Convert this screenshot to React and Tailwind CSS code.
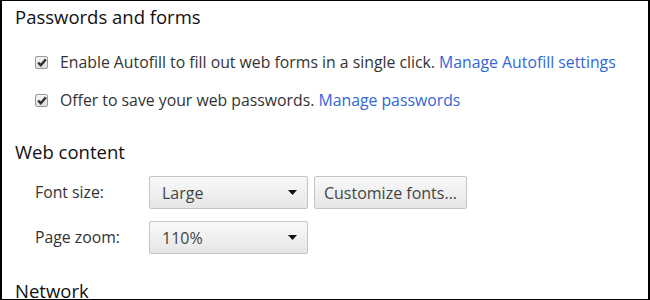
function Checkbox() {
  return (
    <span className="flex h-[13px] w-[13px] shrink-0 items-center justify-center rounded-[2px] border border-[#9a9a9a] bg-gradient-to-b from-[#f6f6f6] to-[#dedede]">
      <svg width="10" height="9" viewBox="0 0 10 9">
        <path d="M1.2 4.6 L3.8 7.2 L8.8 1.4" fill="none" stroke="#333" strokeWidth="2.4" />
      </svg>
    </span>
  )
}

function Select({ value, width }) {
  return (
    <div className={`flex h-[33px] ${width} items-center justify-between rounded-[2px] border border-[#c4c4c4] bg-gradient-to-b from-[#f9f9f9] to-[#e6e6e6] pl-[12px] pr-[10px] text-[16px] text-[#444]`}>
      <span>{value}</span>
      <svg width="9" height="5" viewBox="0 0 9 5">
        <path d="M0 0 H9 L4.5 5 Z" fill="#111" />
      </svg>
    </div>
  )
}

export default function App() {
  return (
    <div
      className="h-[300px] w-[650px] overflow-hidden border-y border-x-2 border-black bg-white"
      style={{ fontFamily: '"Open Sans", "Noto Sans", sans-serif' }}
    >
      <div className="pl-[13px] pt-[3px]">
        <h2 className="text-[18.5px] leading-[26px] text-[#111]">Passwords and forms</h2>
        <div className="mt-[21px] space-y-[16px] pl-[20px] text-[15.8px] leading-[22px] text-[#333]">
          <div className="flex items-center gap-[12px]">
            <Checkbox />
            <p>
              Enable Autofill to fill out web forms in a single click.{' '}
              <a className="text-[#3367d6]">Manage Autofill settings</a>
            </p>
          </div>
          <div className="flex items-center gap-[12px]">
            <Checkbox />
            <p>
              Offer to save your web passwords.{' '}
              <a className="text-[#3367d6]">Manage passwords</a>
            </p>
          </div>
        </div>

        <h2 className="mt-[28px] text-[18.5px] leading-[26px] text-[#111]">Web content</h2>
        <div className="mt-[11px] space-y-[12px] pl-[20px] text-[15.8px] text-[#333]">
          <div className="flex items-center">
            <span className="w-[114px]">Font size:</span>
            <Select value="Large" width="w-[159px]" />
            <button className="ml-[6px] flex h-[33px] w-[153px] items-center justify-center rounded-[2px] border border-[#c4c4c4] bg-gradient-to-b from-[#f9f9f9] to-[#e6e6e6] text-[16px] text-[#444]">
              Customize fonts...
            </button>
          </div>
          <div className="flex items-center">
            <span className="w-[114px]">Page zoom:</span>
            <Select value="110%" width="w-[159px]" />
          </div>
        </div>

        <h2 className="mt-[24px] text-[18.5px] leading-[26px] text-[#111]">Network</h2>
      </div>
    </div>
  )
}
